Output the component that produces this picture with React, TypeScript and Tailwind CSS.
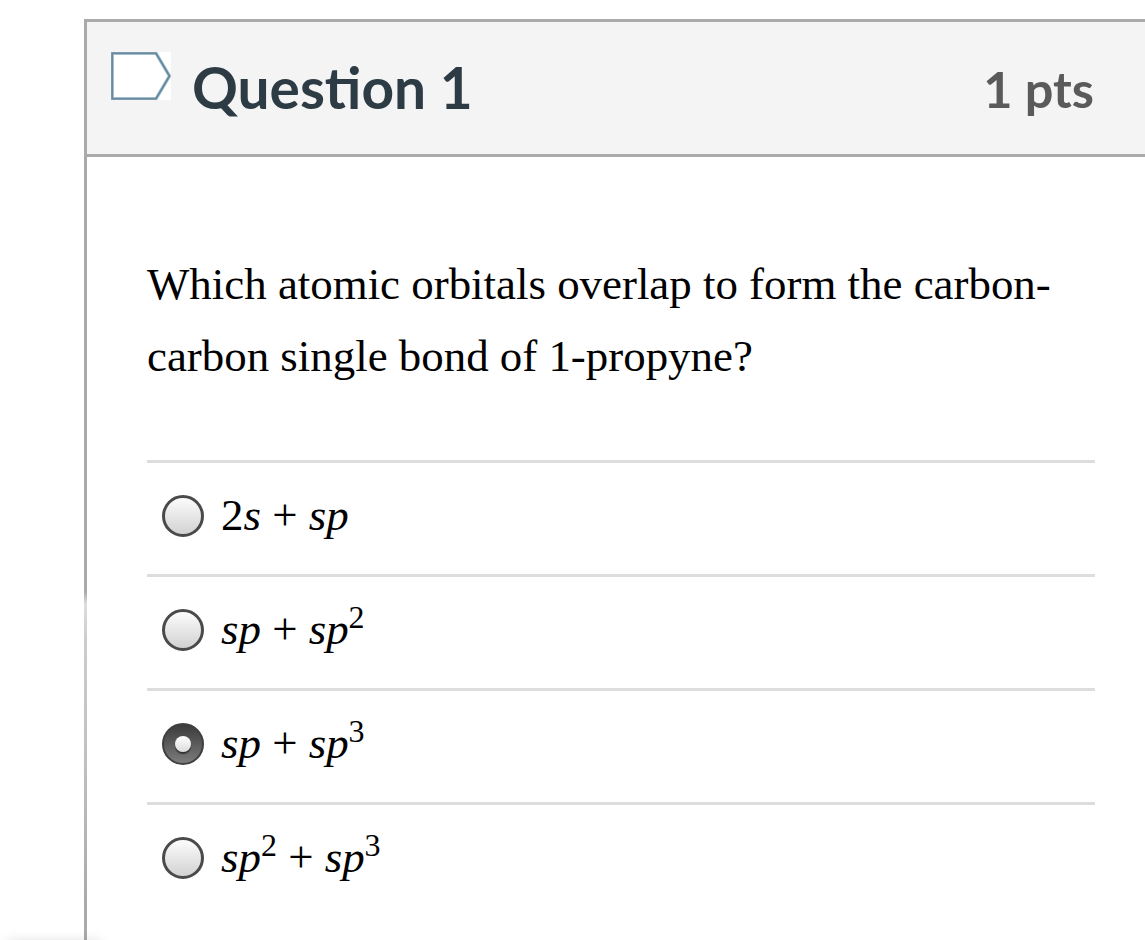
import React from 'react';

type Part = { text: string; italic?: boolean; sup?: boolean };

const answers: { id: string; parts: Part[]; selected?: boolean }[] = [
  { id: 'a', parts: [{ text: '2' }, { text: 's', italic: true }, { text: ' + ' }, { text: 'sp', italic: true }] },
  { id: 'b', parts: [{ text: 'sp', italic: true }, { text: ' + ' }, { text: 'sp', italic: true }, { text: '2', sup: true }] },
  { id: 'c', parts: [{ text: 'sp', italic: true }, { text: ' + ' }, { text: 'sp', italic: true }, { text: '3', sup: true }], selected: true },
  { id: 'd', parts: [{ text: 'sp', italic: true }, { text: '2', sup: true }, { text: ' + ' }, { text: 'sp', italic: true }, { text: '3', sup: true }] },
];

const Radio: React.FC<{ selected?: boolean }> = ({ selected }) =>
  selected ? (
    <span className="flex h-[42px] w-[42px] shrink-0 items-center justify-center rounded-full border-2 border-[#3f3f3f] bg-gradient-to-b from-[#3c3c3c] to-[#7c7c7c]">
      <span className="h-4 w-4 rounded-full bg-gradient-to-b from-white to-[#dcdcdc] shadow-[0_2px_1px_#333]" />
    </span>
  ) : (
    <span className="h-[42px] w-[42px] shrink-0 rounded-full border-[3px] border-[#4a4a4a] bg-gradient-to-b from-[#fcfcfc] to-[#d2d2d2]" />
  );

export default function App() {
  return (
    <main className="relative h-[940px] w-full overflow-hidden bg-white pl-[84px] pt-[19px]">
      <section className="flex h-[921px] border-t-[3px] border-[#aaa]">
        {/* left edge fades out and comes back further down */}
        <div className="w-[3px] shrink-0 bg-[linear-gradient(to_bottom,#aaa_570px,#ddd_582px,#ccc_620px,#c0c0c0_740px,#aaa_880px)]" />
        <div className="flex-1">
          <header className="flex h-[135px] border-b-[3px] border-[#aaa] bg-[#f4f4f4] pl-6 pr-[51px] font-['Lato',sans-serif] font-bold">
            <svg className="mt-[30px] h-12 w-[60px] shrink-0" viewBox="0 0 60 48">
              <rect width="60" height="48" fill="#fff" />
              <path d="M1.2 1.2H45L58.5 24L45 46.8H1.2Z" fill="#fff" stroke="#b9d3e2" strokeWidth="3.6" />
              <path d="M1.2 1.2H45L58.5 24L45 46.8H1.2Z" fill="none" stroke="#68899d" strokeWidth="2" />
            </svg>
            <h1 className="ml-[21px] mt-[29px] text-[56.8px] leading-[72px] text-[#2d3b45]">Question 1</h1>
            <span className="ml-auto mt-[31px] text-[50.5px] leading-[72px] text-[#5a5a5a]">1 pts</span>
          </header>

          <div className="pl-[60px] pr-[50px] font-['Liberation_Serif',serif] text-black">
            <p className="pt-[91px] text-[44.9px] leading-[72px] whitespace-nowrap">
              Which atomic orbitals overlap to form the carbon-
              <br />
              carbon single bond of 1-propyne?
            </p>
            <ul className="mt-[68px]">
              {answers.map(({ id, parts, selected }) => (
                <li key={id} className="flex h-[114px] items-center border-t-[3px] border-[#ddd] pb-1.5 pl-[15px]">
                  <Radio selected={selected} />
                  <span className="-mt-0.5 ml-[17px] whitespace-pre text-[44.9px] leading-[60px]">
                    {parts.map((p, i) =>
                      p.sup ? (
                        <sup key={i} className="-top-4 text-[32px] leading-none">{p.text}</sup>
                      ) : (
                        <span key={i} className={p.italic ? 'italic' : ''}>{p.text}</span>
                      )
                    )}
                  </span>
                </li>
              ))}
            </ul>
          </div>
        </div>
      </section>
      <div className="absolute left-2 top-[943px] h-4 w-[92px] shadow-[0_0_14px_rgba(0,0,0,0.18)]" />
    </main>
  );
}
